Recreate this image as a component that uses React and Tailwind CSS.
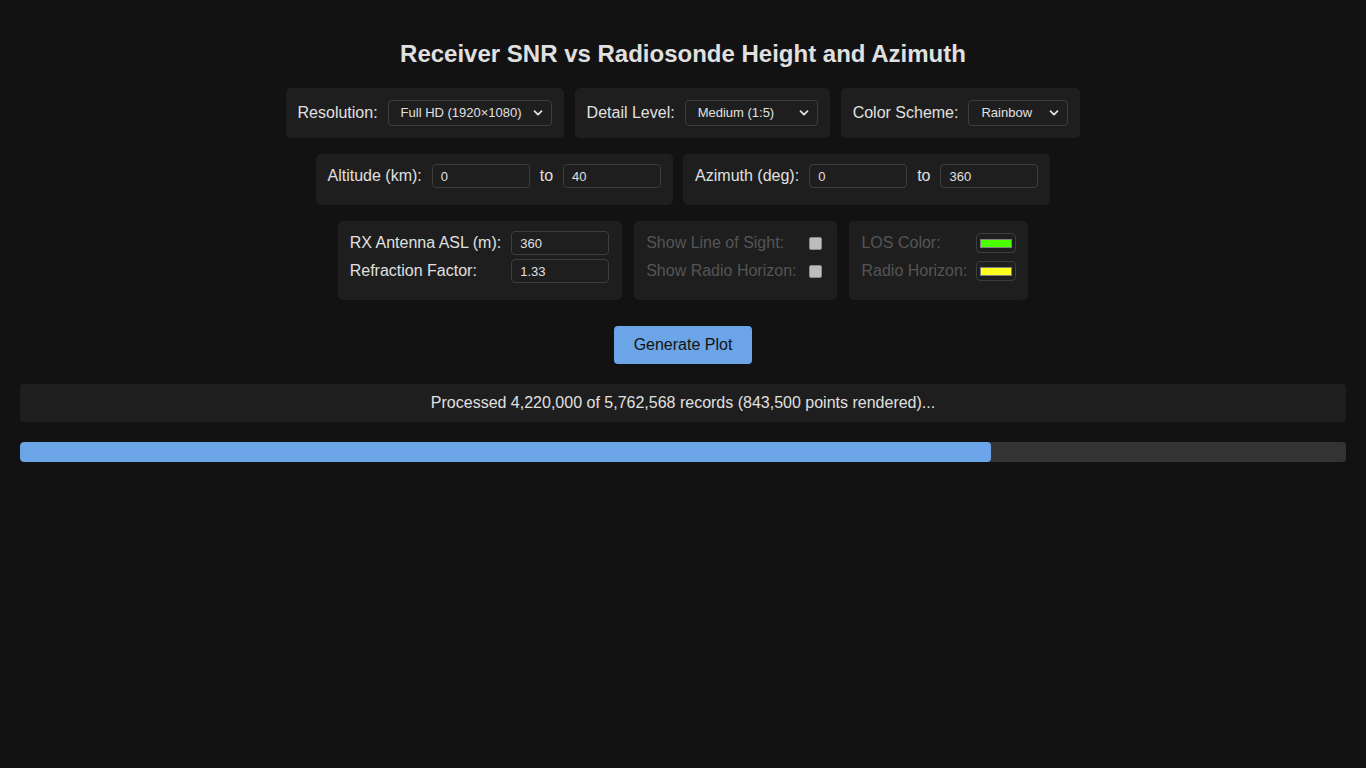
import React from "react";

const font = { fontFamily: '"Liberation Sans", Arial, sans-serif' };

function Chevron() {
  return (
    <svg width="10" height="10" viewBox="0 0 10 10" className="shrink-0">
      <path d="M1.5 3.2 L5 6.7 L8.5 3.2" fill="none" stroke="#e0e0e0" strokeWidth="1.8" strokeLinecap="round" strokeLinejoin="round" />
    </svg>
  );
}

function Select({ value, width }) {
  return (
    <div
      className="flex h-[26px] items-center justify-between rounded-[4px] border border-[#3d3d3d] bg-[#1e1e1e] pl-[12px] pr-[8px] text-[13px] text-[#e0e0e0]"
      style={{ width }}
    >
      <span>{value}</span>
      <Chevron />
    </div>
  );
}

function Input({ value }) {
  return (
    <div className="flex h-[24px] w-[98px] items-center rounded-[4px] border border-[#3d3d3d] bg-[#1e1e1e] px-[8px] pt-[1px] text-[13px] text-[#e0e0e0]">
      {value}
    </div>
  );
}

function Checkbox() {
  return <div className="h-[13px] w-[13px] rounded-[2px] border border-[#8a8a8a] bg-[#bdbdbd]" />;
}

function Swatch({ color }) {
  return (
    <div className="flex h-[20px] w-[40px] items-center justify-center rounded-[4px] border border-[#3d3d3d] bg-[#1e1e1e]">
      <div className="h-[9px] w-[32px] border border-[#808080]" style={{ background: color }} />
    </div>
  );
}

export default function App() {
  return (
    <div className="min-h-[768px] bg-[#121212] px-5 text-[16px] text-[#e0e0e0]" style={font}>
      <h1 className="pt-[40px] text-center text-[24px] font-bold leading-[28px] text-[#e0e0e0]">
        Receiver SNR vs Radiosonde Height and Azimuth
      </h1>

      <div className="mt-[20px] flex justify-center gap-[11px]">
        <div className="flex items-center gap-[10px] rounded-[5px] bg-[#1e1e1e] px-3 py-3">
          <span>Resolution:</span>
          <Select value="Full HD (1920×1080)" width={164} />
        </div>
        <div className="flex items-center gap-[10px] rounded-[5px] bg-[#1e1e1e] px-3 py-3">
          <span>Detail Level:</span>
          <Select value="Medium (1:5)" width={133} />
        </div>
        <div className="flex items-center gap-[10px] rounded-[5px] bg-[#1e1e1e] px-3 py-3">
          <span>Color Scheme:</span>
          <Select value="Rainbow" width={100} />
        </div>
      </div>

      <div className="mt-[16px] flex justify-center gap-[10px]">
        <div className="flex items-center gap-[10px] rounded-[5px] bg-[#1e1e1e] px-3 pb-[17px] pt-[10px]">
          <span>Altitude (km):</span>
          <Input value="0" />
          <span>to</span>
          <Input value="40" />
        </div>
        <div className="flex items-center gap-[10px] rounded-[5px] bg-[#1e1e1e] px-3 pb-[17px] pt-[10px]">
          <span>Azimuth (deg):</span>
          <Input value="0" />
          <span>to</span>
          <Input value="360" />
        </div>
      </div>

      <div className="mt-[16px] flex justify-center gap-[12px]">
        <div className="grid grid-cols-[auto_auto] items-center gap-x-[10px] gap-y-[4px] rounded-[5px] bg-[#1e1e1e] pb-[17px] pl-3 pr-[13px] pt-[10px]">
          <span className="flex h-[24px] items-center">RX Antenna ASL (m):</span>
          <Input value="360" />
          <span className="flex h-[24px] items-center">Refraction Factor:</span>
          <Input value="1.33" />
        </div>
        <div className="grid grid-cols-[auto_auto] items-center gap-x-[13px] gap-y-[4px] rounded-[5px] bg-[#1e1e1e] pb-[17px] pl-3 pr-[15px] pt-[10px] text-[#555555]">
          <span className="flex h-[24px] items-center">Show Line of Sight:</span>
          <Checkbox />
          <span className="flex h-[24px] items-center">Show Radio Horizon:</span>
          <Checkbox />
        </div>
        <div className="grid grid-cols-[auto_auto] items-center gap-x-[9px] gap-y-[4px] rounded-[5px] bg-[#1e1e1e] px-3 pb-[17px] pt-[10px] text-[#555555]">
          <span className="flex h-[24px] items-center">LOS Color:</span>
          <Swatch color="#4cff00" />
          <span className="flex h-[24px] items-center">Radio Horizon:</span>
          <Swatch color="#ffff1f" />
        </div>
      </div>

      <div className="mt-[26px] flex justify-center">
        <div className="flex h-[38px] w-[138px] items-center justify-center rounded-[4px] bg-[#6ba5e7] text-[16px] text-[#121212]">
          Generate Plot
        </div>
      </div>

      <div className="mt-[20px] flex h-[38px] items-center justify-center rounded-[4px] bg-[#1e1e1e] text-[16px] text-[#e0e0e0]">
        Processed 4,220,000 of 5,762,568 records (843,500 points rendered)...
      </div>

      <div className="mt-[20px] h-[20px] overflow-hidden rounded-[4px] bg-[#333333]">
        <div className="h-full rounded-[4px] bg-[#6ba5e7]" style={{ width: `${(4220000 / 5762568) * 100}%` }} />
      </div>
    </div>
  );
}
